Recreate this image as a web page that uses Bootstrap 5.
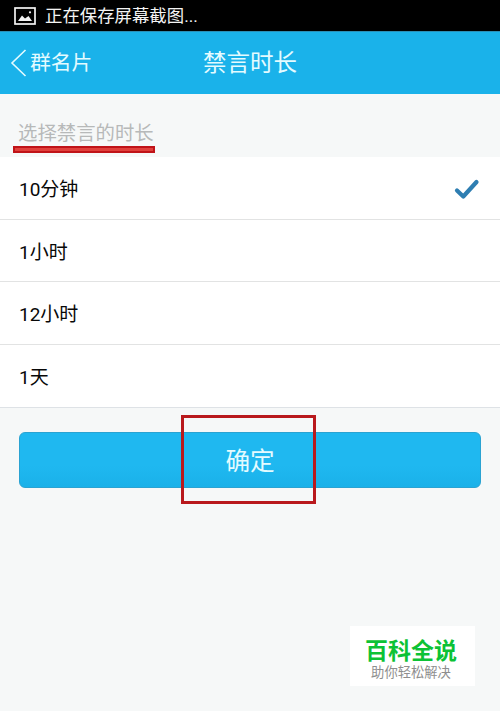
<!DOCTYPE html>
<html lang="zh-CN">
<head>
    <meta charset="UTF-8">
    <meta name="viewport" content="width=device-width, initial-scale=1.0">
    <title>禁言时长</title>
    <link href="https://cdn.jsdelivr.net/npm/bootstrap@5.3.3/dist/css/bootstrap.min.css" rel="stylesheet">
    <style>
        body {
            height: 711px;
            overflow: hidden;
            background-color: #f6f8f8;
            color: #080808;
            font-family: Roboto, "Noto Sans CJK SC", sans-serif;
        }

        .status-bar {
            height: 31px;
            padding: 2px 0 0 14px;
            gap: 9px;
            background-color: #000;
            color: #f4f4f4;
            font-size: 17.4px;
        }

        .status-bar svg {
            margin-bottom: 2px;
        }

        .top-bar {
            height: 63px;
            background-color: #1ab2ea;
            border-top: 1px solid #2a8fb8;
            color: #e4fbff;
        }

        .back-link {
            padding-left: 10px;
            gap: 2px;
            color: inherit;
            font-size: 20.8px;
        }

        .back-link span {
            padding-top: 2px;
        }

        .page-title {
            padding-top: 2px;
            font-size: 23.5px;
        }

        .hint {
            height: 63px;
            padding: 25px 0 0 18px;
            color: #b7b9b9;
            font-size: 19.4px;
            line-height: 30px;
        }

        .hint-mark {
            top: 52px;
            left: 13px;
            width: 142px;
            height: 7px;
            background-color: #e0403c;
            border: solid #c01318;
            border-width: 2px;
        }

        .durations .list-group-item {
            height: 62.5px;
            padding: 5px 20px 0 19px;
            border-color: #e2e3e3;
            border-width: 0 0 1px;
            color: #080808;
            font-size: 19px;
        }

        .confirm {
            margin: 24px 19px 0;
        }

        .btn-confirm {
            height: 56px;
            padding: 5px 0 0;
            background: linear-gradient(#1fb8f0 60%, #1ab1e9);
            border: 1px solid #2aa3d2;
            border-radius: 6px;
            color: #e4fbff;
            font-size: 24.6px;
        }

        /* marca roja sobre el botón */
        .confirm-mark {
            top: -17px;
            left: 162px;
            width: 135px;
            height: 89px;
            border: 3px solid #b9191d;
        }

        .site-tag {
            right: 25px;
            bottom: 25px;
            width: 125px;
            height: 60px;
            padding: 12px 3px 0 0;
            background-color: #fff;
        }

        .site-name {
            color: #0cc235;
            font-size: 23px;
            font-weight: 700;
            line-height: 28px;
        }

        .site-slogan {
            color: #8e8e8e;
            font-size: 13.3px;
            line-height: 14px;
        }
    </style>
</head>
<body>
    <div class="status-bar d-flex align-items-center">
        <svg width="22" height="18" viewBox="0 0 22 18">
            <rect x="1" y="1" width="20" height="16" fill="none" stroke="#f4f4f4" stroke-width="1.7"/>
            <path d="M4 14L8 8.5L11 11.5L14.5 9L18 14Z" fill="#f4f4f4"/>
            <circle cx="16" cy="5.3" r="1.1" fill="#f4f4f4"/>
        </svg>
        <span>正在保存屏幕截图...</span>
    </div>

    <header class="top-bar row g-0 align-items-center">
        <div class="col-3">
            <a href="#" class="back-link d-flex align-items-center text-decoration-none">
                <svg width="18" height="28" viewBox="0 0 18 28" fill="none" stroke="#e4fbff" stroke-width="1.6">
                    <path d="M15.5 1L2 14L15.5 27"/>
                </svg>
                <span class="text-nowrap">群名片</span>
            </a>
        </div>
        <div class="col-6 text-center page-title">禁言时长</div>
    </header>

    <div class="hint position-relative">
        选择禁言的时长
        <div class="hint-mark position-absolute"></div>
    </div>

    <ul class="durations list-group list-group-flush border-bottom">
        <li class="list-group-item d-flex align-items-center justify-content-between">
            10分钟
            <svg width="26" height="22" viewBox="0 0 26 22" fill="none" stroke="#2e7eb2" stroke-width="4.2" stroke-linecap="round" stroke-linejoin="round">
                <path d="M3 11.5L9.3 17.5L22.5 3"/>
            </svg>
        </li>
        <li class="list-group-item d-flex align-items-center">1小时</li>
        <li class="list-group-item d-flex align-items-center">12小时</li>
        <li class="list-group-item d-flex align-items-center">1天</li>
    </ul>

    <div class="confirm position-relative">
        <button type="button" class="btn btn-confirm w-100">确定</button>
        <div class="confirm-mark position-absolute"></div>
    </div>

    <div class="site-tag position-absolute text-center">
        <div class="site-name">百科全说</div>
        <div class="site-slogan">助你轻松解决</div>
    </div>

    <script src="https://cdn.jsdelivr.net/npm/bootstrap@5.3.3/dist/js/bootstrap.bundle.min.js"></script>
</body>
</html>
